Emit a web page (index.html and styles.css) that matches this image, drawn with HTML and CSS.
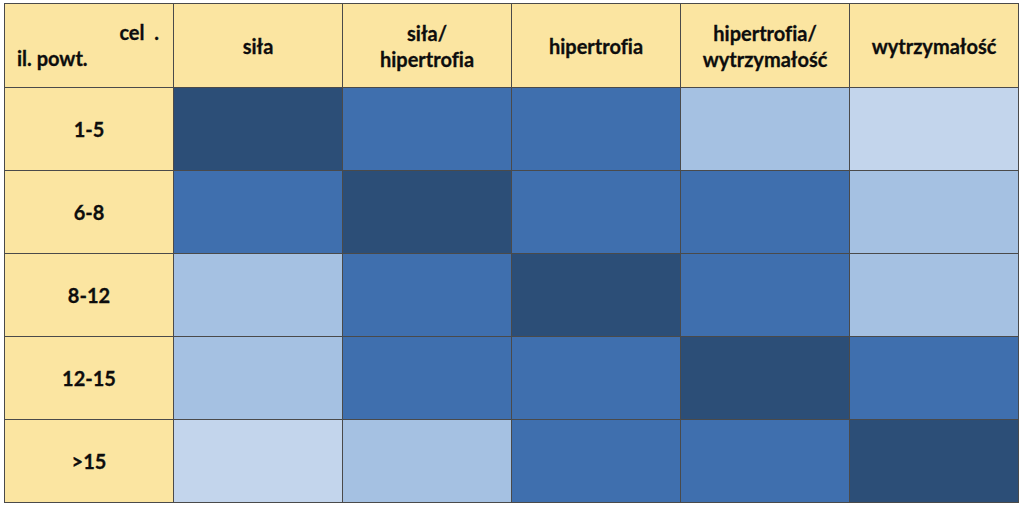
FILE: index.html
```html
<!DOCTYPE html>
<html lang="pl">
<head>
<meta charset="utf-8">
<link rel="stylesheet" href="styles.css">
</head>
<body>
<div class="grid">
  <div class="cell head corner"><span class="cel">cel&nbsp;&nbsp;.</span><span class="il">il. powt.</span></div>
  <div class="cell head">siła</div>
  <div class="cell head">siła/<br>hipertrofia</div>
  <div class="cell head">hipertrofia</div>
  <div class="cell head">hipertrofia/<br>wytrzymałość</div>
  <div class="cell head">wytrzymałość</div>

  <div class="cell head">1-5</div>
  <div class="cell c4"></div><div class="cell c3"></div><div class="cell c3"></div><div class="cell c2"></div><div class="cell c1"></div>

  <div class="cell head">6-8</div>
  <div class="cell c3"></div><div class="cell c4"></div><div class="cell c3"></div><div class="cell c3"></div><div class="cell c2"></div>

  <div class="cell head">8-12</div>
  <div class="cell c2"></div><div class="cell c3"></div><div class="cell c4"></div><div class="cell c3"></div><div class="cell c2"></div>

  <div class="cell head">12-15</div>
  <div class="cell c2"></div><div class="cell c3"></div><div class="cell c3"></div><div class="cell c4"></div><div class="cell c3"></div>

  <div class="cell head">&gt;15</div>
  <div class="cell c1"></div><div class="cell c2"></div><div class="cell c3"></div><div class="cell c3"></div><div class="cell c4"></div>
</div>
</body>
</html>
```
FILE: styles.css
```css
html, body {
  margin: 0;
  padding: 0;
  background: #ffffff;
}
body {
  padding: 3px 0 0 4px;
  font-family: Lato, "Liberation Sans", sans-serif;
}
.grid {
  display: grid;
  grid-template-columns: repeat(6, 168px);
  grid-template-rows: 83px repeat(5, 82px);
  gap: 1px;
  padding: 1px;
  background: #4a4a4a;
  width: max-content;
}
.cell {
  display: flex;
  align-items: center;
  justify-content: center;
  text-align: center;
}
.head {
  background: #fbe5a1;
  color: #0d0d0d;
  font-weight: 700;
  font-size: 20px;
  line-height: 26px;
  font-variant-ligatures: none;
  -webkit-text-stroke: 0.3px #0d0d0d;
}
.corner {
  flex-direction: column;
  align-items: stretch;
  justify-content: center;
  padding-bottom: 2px;
}
.cel {
  text-align: right;
  padding-right: 14px;
}
.il {
  text-align: left;
  padding-left: 12px;
}
.c1 { background: #c3d5ec; }
.c2 { background: #a5c1e2; }
.c3 { background: #3f6fae; }
.c4 { background: #2c4e77; }
```
